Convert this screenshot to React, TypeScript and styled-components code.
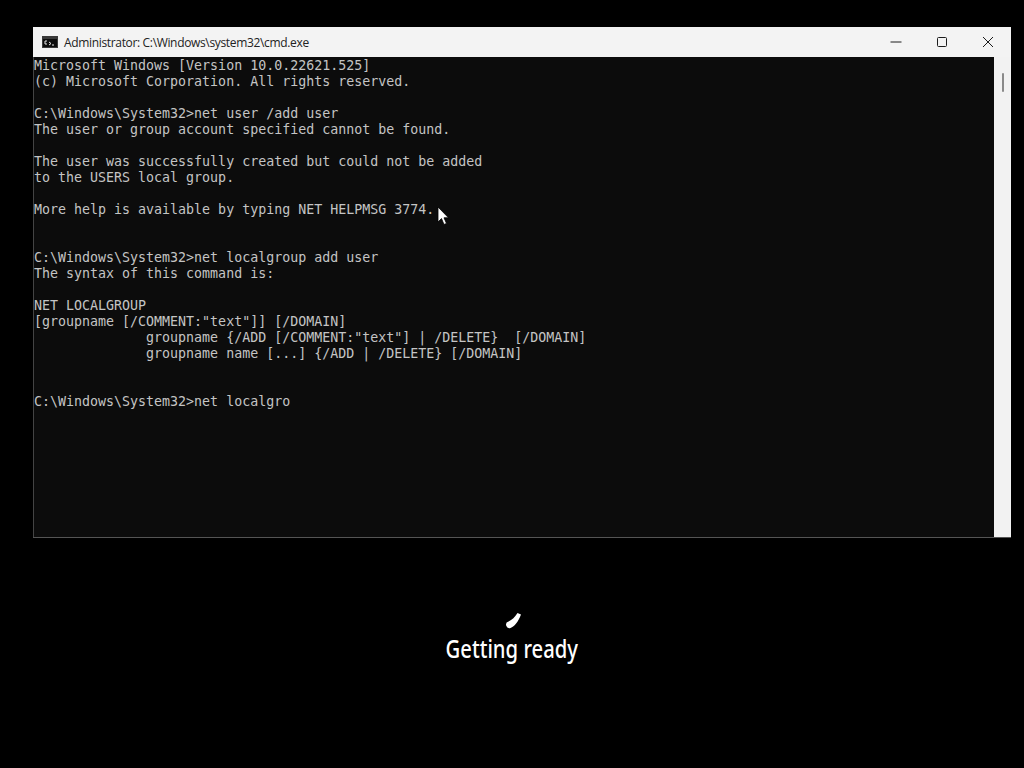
import styled, { createGlobalStyle } from "styled-components"

const GlobalStyle = createGlobalStyle`
  html, body {
    margin: 0;
    padding: 0;
    background: #000;
  }
`

const Screen = styled.div`
  width: 1024px;
  height: 768px;
  background: #000;
  overflow: hidden;
  display: flex;
  flex-direction: column;
  padding: 27px 13px 0 33px;
  box-sizing: border-box;
`

const Window = styled.div`
  position: relative;
  width: 978px;
  height: 511px;
  flex: none;
  display: flex;
  flex-direction: column;
  background: #f2f2f2;
`

const TitleBar = styled.div`
  height: 30px;
  flex: none;
  display: flex;
  align-items: center;
  background: #f3f3f3;
  padding-left: 9px;
`

const AppIcon = styled.svg`
  width: 16px;
  height: 12px;
  flex: none;
  margin-right: 6px;
`

const Title = styled.span`
  flex: 1;
  font-family: "Open Sans", "Noto Sans", sans-serif;
  font-size: 12px;
  letter-spacing: -0.34px;
  color: #222;
  white-space: nowrap;
`

const Controls = styled.div`
  display: flex;
  height: 100%;
`

const ControlButton = styled.div`
  width: 46px;
  height: 30px;
  display: flex;
  align-items: center;
  justify-content: center;
  color: #1c1c1c;
`

const Body = styled.div`
  flex: 1;
  display: flex;
  min-height: 0;
  border-bottom: 1px solid #555;
`

const Console = styled.pre`
  flex: 1;
  margin: 0;
  padding: 1px 0 0 0;
  background: #0c0c0c;
  border-left: 1px solid #444;
  color: #c4c4c4;
  font-family: "DejaVu Sans Mono", "Liberation Mono", monospace;
  font-size: 13.3px;
  line-height: 16px;
  overflow: hidden;
`

const ScrollTrack = styled.div`
  width: 17px;
  flex: none;
  background: #f2f2f2;
  display: flex;
  justify-content: center;
  padding: 16px 0 0 0;
  box-sizing: border-box;
`

const ScrollThumb = styled.div`
  width: 2px;
  height: 19px;
  border-radius: 1px;
  background: #8a8a8a;
`

const Pointer = styled.svg`
  position: absolute;
  left: 404px;
  top: 179px;
  width: 12px;
  height: 20px;
`

const Status = styled.div`
  display: flex;
  flex-direction: column;
  align-items: center;
  width: 1024px;
  margin: 74px 0 0 -33px;
`

const Spinner = styled.svg`
  width: 18px;
  height: 17px;
  display: block;
`

const StatusText = styled.div`
  font-family: "Noto Sans", "Open Sans", sans-serif;
  font-size: 25px;
  font-weight: 500;
  line-height: 32px;
  margin-top: 3px;
  color: #fff;
  transform: scaleX(0.81);
  white-space: nowrap;
`

const consoleText = `Microsoft Windows [Version 10.0.22621.525]
(c) Microsoft Corporation. All rights reserved.

C:\\Windows\\System32>net user /add user
The user or group account specified cannot be found.

The user was successfully created but could not be added
to the USERS local group.

More help is available by typing NET HELPMSG 3774.


C:\\Windows\\System32>net localgroup add user
The syntax of this command is:

NET LOCALGROUP
[groupname [/COMMENT:"text"]] [/DOMAIN]
              groupname {/ADD [/COMMENT:"text"] | /DELETE}  [/DOMAIN]
              groupname name [...] {/ADD | /DELETE} [/DOMAIN]


C:\\Windows\\System32>net localgro`

const App = () => {
  return (
    <>
      <GlobalStyle />
      <Screen>
        <Window>
          <TitleBar>
            <AppIcon viewBox="0 0 16 12">
              <rect width="16" height="12" fill="#3a3a3a" />
              <rect x="1" y="3" width="14" height="8" fill="#0c0c0c" />
              <path d="M3 5 H5 M3 5 V8 H5 M7 6 L9 7.5 L7 9 M10 9 H12" stroke="#e8e8e8" strokeWidth="1" fill="none" />
            </AppIcon>
            <Title>Administrator: C:\Windows\system32\cmd.exe</Title>
            <Controls>
              <ControlButton>
                <svg width="12" height="12" viewBox="0 0 12 12">
                  <path d="M0.5 6 H11.5" stroke="currentColor" strokeWidth="1" />
                </svg>
              </ControlButton>
              <ControlButton>
                <svg width="12" height="12" viewBox="0 0 12 12">
                  <rect x="1.5" y="1.5" width="9" height="9" rx="1" stroke="currentColor" fill="none" />
                </svg>
              </ControlButton>
              <ControlButton>
                <svg width="12" height="12" viewBox="0 0 12 12">
                  <path d="M1 1 L11 11 M11 1 L1 11" stroke="currentColor" strokeWidth="1" />
                </svg>
              </ControlButton>
            </Controls>
          </TitleBar>
          <Body>
            <Console>{consoleText}</Console>
            <ScrollTrack>
              <ScrollThumb />
            </ScrollTrack>
          </Body>
          <Pointer viewBox="0 0 12 20">
            <path d="M1 1 V16 L4.5 12.6 L7 18.5 L9.5 17.4 L7 11.8 H11.5 Z" fill="#fff" stroke="#000" strokeWidth="0.8" />
          </Pointer>
        </Window>
        <Status>
          <Spinner viewBox="0 0 18 17">
            <path d="M5.5 9.5 C9 8 12 5 14.5 1 L18 2.5 C15.5 9.5 11.5 14.5 7.5 16 A3.4 3.4 0 0 1 5.5 9.5 Z" fill="#fff" />
          </Spinner>
          <StatusText>Getting ready</StatusText>
        </Status>
      </Screen>
    </>
  )
}

export default App
